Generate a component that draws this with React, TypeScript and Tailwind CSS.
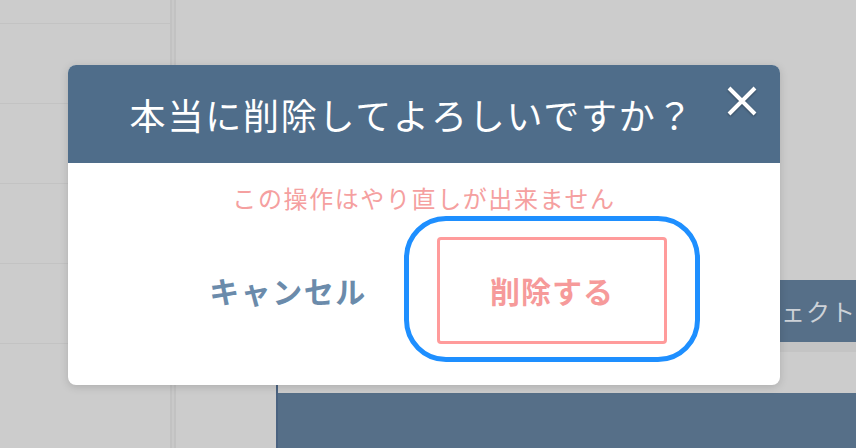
import React from 'react';

const JP = '"Noto Sans CJK JP", "Noto Sans", sans-serif';

const leftRows = [0, 1, 2, 3];

export default function App() {
  return (
    <div
      className="relative w-[856px] h-[448px] overflow-hidden bg-[#cccccc]"
      style={{ fontFamily: JP }}
    >
      {/* page behind the dialog */}
      <div className="flex h-full">
        <div className="w-[170px] flex flex-col">
          <div className="h-[24px] border-b border-[#c3c3c3]" />
          {leftRows.map((i) => (
            <div key={i} className="h-[80px] border-b border-[#c3c3c3]" />
          ))}
        </div>
        <div className="w-[6px] h-full border-x-2 border-[#c2c2c2] bg-[#c9c9c9]" />
        <div className="flex-1 flex flex-col pt-[280px]">
          <div className="flex justify-end">
            <div className="w-[220px] h-[62px] bg-[#566f88] flex items-center justify-end">
              <span className="text-[24px] tracking-[1px] text-[#cdd2d8]">プロジェクト</span>
            </div>
          </div>
          <div className="h-[10px] bg-[#c4c4c4]" />
          <div className="h-[33px]" />
          <div className="ml-[100px] flex-1 bg-[#566f88] border-l-2 border-[#4a6280]">
            <div className="h-[8px] bg-[#cccccc]" />
          </div>
        </div>
      </div>

      {/* dialog */}
      <div className="absolute left-[68px] top-[65px] w-[712px] h-[320px] rounded-[8px] overflow-hidden bg-white shadow-[0_2px_8px_rgba(0,0,0,0.15)] flex flex-col">
        <div className="relative h-[98px] bg-[#4f6d8a] flex items-center justify-center pr-[24px]">
          <h2 className="text-[36px] tracking-[1.8px] text-white font-normal">本当に削除してよろしいですか？</h2>
          <button className="absolute right-[22px] top-[21px] w-[32px] h-[30px] flex items-center justify-center">
            <svg width="32" height="30" viewBox="0 0 32 30" className="drop-shadow-[0_1px_1px_rgba(0,0,0,0.35)]">
              <path d="M3 2 L29 28 M29 2 L3 28" stroke="white" strokeWidth="4" strokeLinecap="butt" />
            </svg>
          </button>
        </div>

        <div className="flex flex-col items-center pt-[21px]">
          <p className="text-[24px] leading-[28px] tracking-[1.6px] text-[#f5a0a0]">この操作はやり直しが出来ません</p>
          <div className="mt-[25px] flex items-center justify-center gap-[34px] pr-[8px]">
            <button className="w-[230px] h-[107px] flex items-center justify-center text-[30px] font-bold tracking-[1.5px] text-[#6b8bab]">
              キャンセル
            </button>
            <button className="relative w-[230px] h-[107px] rounded-[4px] border-[3px] border-[#ff9b9b] flex items-center justify-center text-[30px] font-bold tracking-[1px] text-[#f69a9a]">
              削除する
              <span className="absolute -left-[36px] -right-[36px] -top-[24px] -bottom-[21px] rounded-[42px] border-[5px] border-[#1e8fff]" />
            </button>
          </div>
        </div>
      </div>
    </div>
  );
}
